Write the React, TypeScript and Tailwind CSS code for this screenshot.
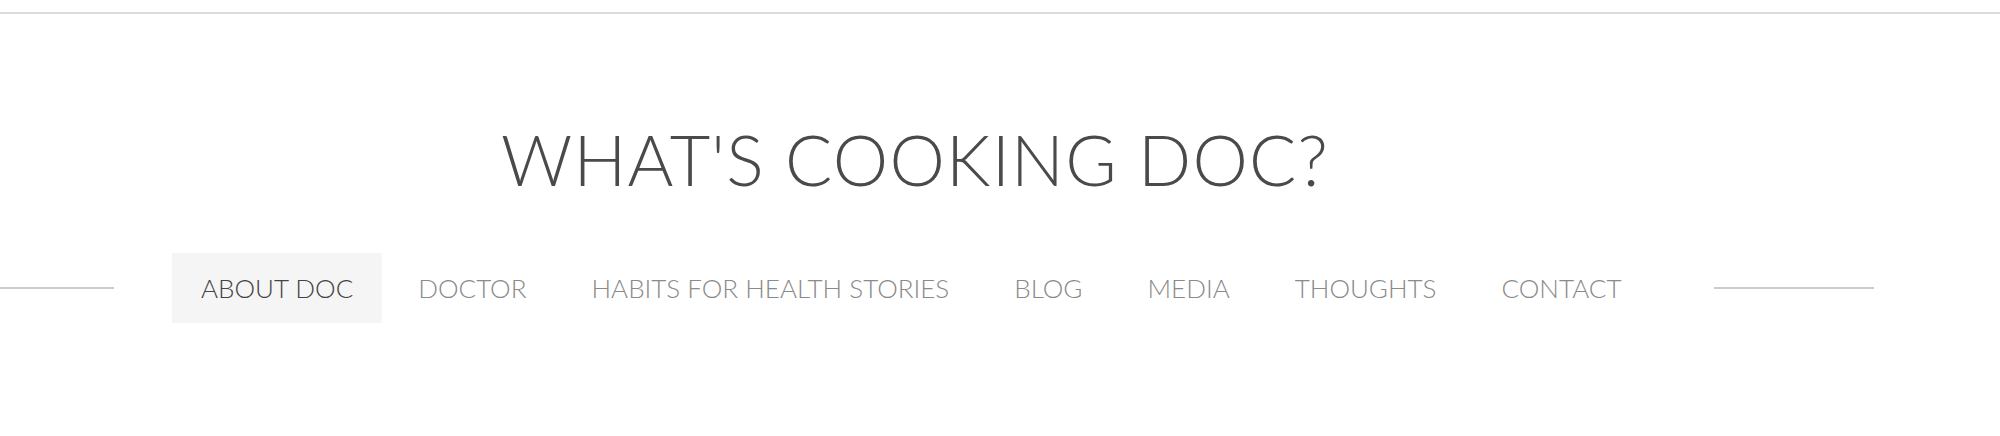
const items = [
  'ABOUT DOC',
  'DOCTOR',
  'HABITS FOR HEALTH STORIES',
  'BLOG',
  'MEDIA',
  'THOUGHTS',
  'CONTACT',
];

export default function App() {
  const active = 'ABOUT DOC';

  return (
    <div className="min-h-[436px] bg-white font-['Lato','Open_Sans',sans-serif]">
      <div className="pt-3">
        <div className="h-[2px] bg-[#dcdce0]" />
      </div>

      <div className="w-[1830px]">
        <h1 className="mt-[110px] text-center text-[70px] font-light leading-none tracking-[1.2px] text-[#4a4a4a]">
          WHAT'S COOKING DOC?
        </h1>

        <div className="mt-[59px] flex items-center">
          <div className="h-[2px] w-[114px] shrink-0 bg-[#cccccc]" />
          <nav className="ml-[58px] flex shrink-0 gap-[7px]">
            {items.map((item) => (
              <a
                key={item}
                href="#"
                className={
                  item === active
                    ? 'flex h-[70px] items-center whitespace-nowrap bg-[#f5f5f5] px-[29px] text-[26px] font-light text-[#444444]'
                    : 'flex h-[70px] items-center whitespace-nowrap px-[29px] text-[26px] font-light text-[#8a8a8a]'
                }
              >
                {item}
              </a>
            ))}
          </nav>
          <div className="ml-[64px] h-[2px] w-[160px] shrink-0 bg-[#cccccc]" />
        </div>
      </div>
    </div>
  );
}
